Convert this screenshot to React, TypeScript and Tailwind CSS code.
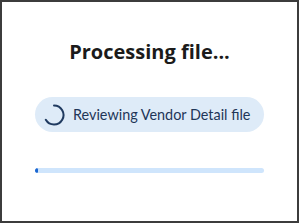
export default function App() {
  return (
    <div
      className="flex h-[223px] w-[299px] flex-col items-center border-2 border-[#3c3c3c] bg-white"
      style={{ fontFamily: '"Open Sans", "Noto Sans", sans-serif' }}
    >
      <h1 className="mt-[36px] text-[20px] font-bold leading-[28px] text-[#1b1b1b]">Processing file...</h1>

      <div className="mt-[31px] flex h-[35px] w-[229px] items-center gap-[8px] rounded-full bg-[#deebf8] pl-[8px]">
        <svg className="shrink-0" width="22" height="22" viewBox="0 0 22 22" fill="none">
          <path
            d="M11 1.5 A9.5 9.5 0 1 1 2.8 15.8"
            stroke="#1f3a60"
            strokeWidth="2"
            strokeLinecap="round"
          />
        </svg>
        <span
          className="whitespace-nowrap text-[14.4px] leading-[20px] text-[#1f3658]"
          style={{ fontFamily: 'Lato, "Open Sans", sans-serif' }}
        >
          Reviewing Vendor Detail file
        </span>
      </div>

      <div className="mt-[36px] h-[5px] w-[229px] overflow-hidden rounded-full bg-[#cfe5fc]">
        <div className="h-full w-[3px] rounded-full bg-[#1a66d1]" />
      </div>
    </div>
  )
}
